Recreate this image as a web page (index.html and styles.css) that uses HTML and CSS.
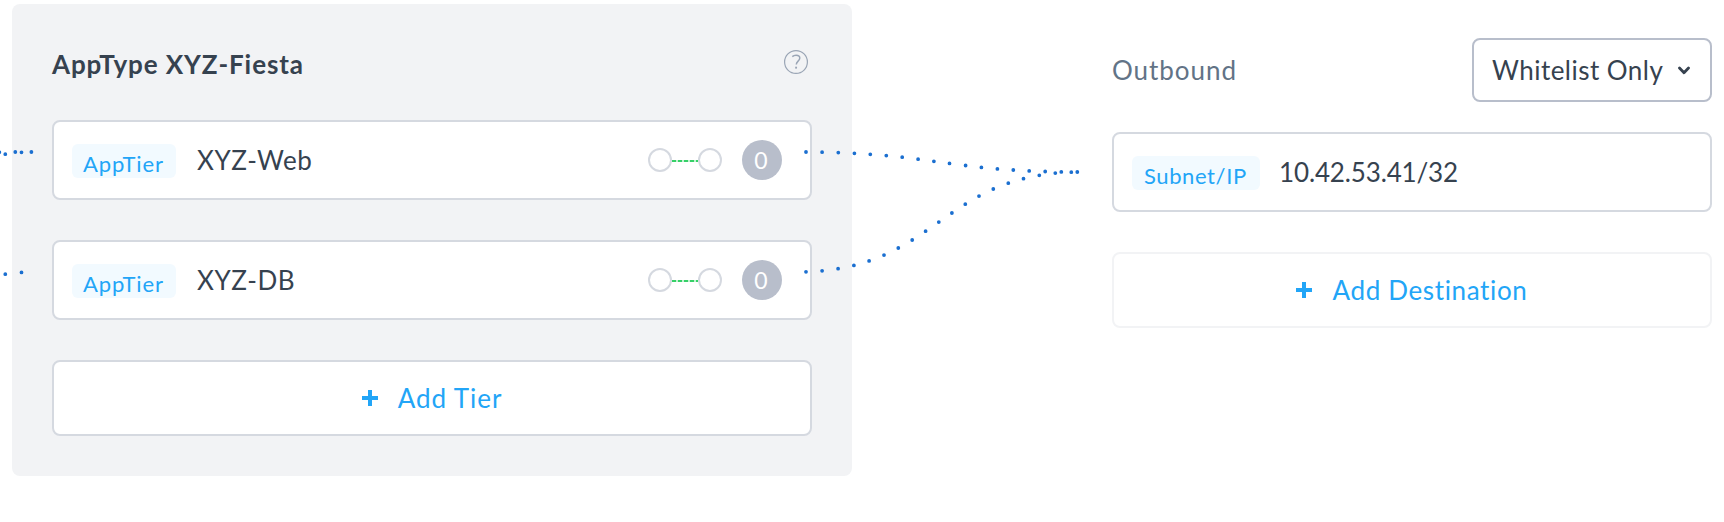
FILE: index.html
```html
<!DOCTYPE html>
<html lang="en">
<head>
<meta charset="utf-8">
<title>Policy</title>
<link rel="stylesheet" href="styles.css">
</head>
<body>
<main class="policy">
  <section class="panel">
    <header class="panel-head">
      <h2 class="title">AppType XYZ-Fiesta</h2>
      <svg class="help" width="24" height="24" viewBox="0 0 24 24" fill="none" stroke="#9aa5b5">
        <circle cx="12" cy="12" r="11.4" stroke-width="1.2"/>
        <path d="M8.300 6.600C9.500 5.500 10.800 5.200 12.100 5.200c2.200 0 3.700 1.100 3.700 2.900 0 3-3.500 3.100-3.500 6.300" stroke-width="1.500"/>
        <path d="M12.100 16.700v1.900" stroke-width="1.900"/>
      </svg>
    </header>
    <div class="card">
      <span class="tag">AppTier</span>
      <span class="name">XYZ-Web</span>
      <span class="link"><i class="node"></i><i class="dash"></i><i class="node"></i></span>
      <span class="badge">0</span>
    </div>
    <div class="card">
      <span class="tag">AppTier</span>
      <span class="name">XYZ-DB</span>
      <span class="link"><i class="node"></i><i class="dash"></i><i class="node"></i></span>
      <span class="badge">0</span>
    </div>
    <button class="add">
      <svg width="16" height="16" viewBox="0 0 16 16"><path d="M6 0h4v6h6v4h-6v6H6v-6H0V6h6z" fill="#22a5f7"/></svg>
      <span>Add Tier</span>
    </button>
  </section>
  <section class="outbound">
    <header class="out-head">
      <span class="out-label">Outbound</span>
      <button class="select">
        <span>Whitelist Only</span>
        <svg width="12" height="9" viewBox="0 0 12 9" fill="none" stroke="#36424f" stroke-width="2.800" stroke-linecap="round" stroke-linejoin="round"><path d="M1.500 2L6 6.700l4.500-4.700"/></svg>
      </button>
    </header>
    <div class="card">
      <span class="tag tag-subnet">Subnet/IP</span>
      <span class="name name-ip">10.42.53.41/32</span>
    </div>
    <button class="add add-faint">
      <svg width="16" height="16" viewBox="0 0 16 16"><path d="M6 0h4v6h6v4h-6v6H6v-6H0V6h6z" fill="#22a5f7"/></svg>
      <span>Add Destination</span>
    </button>
  </section>
  <svg class="flows" width="1724" height="522" viewBox="0 0 1724 522">
    <path d="M-.7 152.300h0M5.300 154.200h0M15.300 152h0M21.500 152.300h0M31.400 152h0"/>
    <path d="M5.300 274.200h0M21.500 272.400h0"/>
    <path d="M806 152h0M822.100 152.200h0M838.300 152.600h0M854.400 153.300h0M870.300 154.300h0M886.300 155.600h0M902.200 157.200h0M918.100 159.200h0M933.900 161.300h0M949.500 163.400h0M965.600 165.500h0M981.400 167.400h0M997.400 168.900h0M1013.300 170h0M1029.200 170.900h0M1045.200 171.500h0M1061.300 171.900h0M1077.300 172h0"/>
    <path d="M806 271.800h0M822.100 270.800h0M838.100 268.700h0M853.900 265.400h0M869.100 260.900h0M884 255.100h0M898.300 248h0M912.200 240h0M925.600 231.200h0M938.800 222.100h0M951.900 213h0M965.300 204.200h0M979 196.100h0M993.300 189h0M1008.300 183.200h0M1023.500 178.700h0M1039.300 175.300h0M1055.300 173.100h0M1071.300 172.200h0"/>
  </svg>
</main>
</body>
</html>
```
FILE: styles.css
```css
* { box-sizing: border-box; }
body { margin: 0; background: #fff; font-family: Lato, sans-serif; font-size: 26px; line-height: 32px; color: #36424f; }
button { font: inherit; color: inherit; margin: 0; background: #fff; }
.policy { position: relative; display: flex; gap: 260px; width: 1724px; height: 522px; padding: 4px 12px 0; overflow: hidden; }
.flows { position: absolute; left: 0; top: 0; fill: none; stroke: #1b6fd0; stroke-width: 3.800; stroke-linecap: round; pointer-events: none; }

.panel { display: flex; flex-direction: column; gap: 40px; width: 840px; height: 472px; padding: 0 40px; border-radius: 8px; background: #f2f3f5; }
.panel-head { display: flex; justify-content: space-between; height: 76px; padding: 44px 4px 0 0; }
.help { margin-top: 2px; }
.title { margin: 0; font-size: 26px; font-weight: 700; line-height: 32px; letter-spacing: .9px; }

.card { display: flex; align-items: center; flex: none; height: 80px; padding: 0 28px 0 18px; border: 2px solid #d5d9e0; border-radius: 8px; background: #fff; }
.tag { display: block; width: 104px; height: 34px; margin-top: 2px; padding: 3px 0 0 11px; border-radius: 6px; background: #f2faff; color: #22a5f7; font-size: 22px; line-height: 34px; letter-spacing: .9px; white-space: nowrap; }
.tag-subnet { width: 128px; padding-left: 12px; letter-spacing: .6px; }
.name { margin-left: 21px; letter-spacing: .55px; white-space: nowrap; }
.name-ip { margin-left: 19px; letter-spacing: -.14px; }
.link { display: flex; align-items: center; margin-left: auto; }
.node { width: 24px; height: 24px; border: 2px solid #d5d9e0; border-radius: 50%; }
.dash { width: 26px; height: 2px; margin-top: 2px; background: repeating-linear-gradient(90deg, #36d068 0 4px, #c4f2d2 4px 6px); }
.badge { width: 40px; height: 40px; margin-left: 20px; padding-right: 2px; border-radius: 50%; background: #b8becb; color: #fff; font-size: 23px; line-height: 40px; text-align: center; }

.add { display: flex; align-items: center; justify-content: center; gap: 20px; flex: none; height: 76px; padding: 0; border: 2px solid #d5d9e0; border-radius: 8px; color: #22a5f7; letter-spacing: .95px; white-space: nowrap; }
.add-faint { margin-top: 40px; border-color: #f2f3f5; letter-spacing: .65px; }

.outbound { display: flex; flex-direction: column; width: 600px; padding-top: 34px; }
.out-head { display: flex; align-items: center; justify-content: space-between; height: 64px; margin-bottom: 30px; }
.out-label { color: #627386; letter-spacing: .95px; }
.select { display: flex; align-items: center; justify-content: space-between; width: 240px; height: 64px; padding: 0 20px 0 18px; border: 2px solid #b8becb; border-radius: 8px; letter-spacing: .47px; white-space: nowrap; }
```
